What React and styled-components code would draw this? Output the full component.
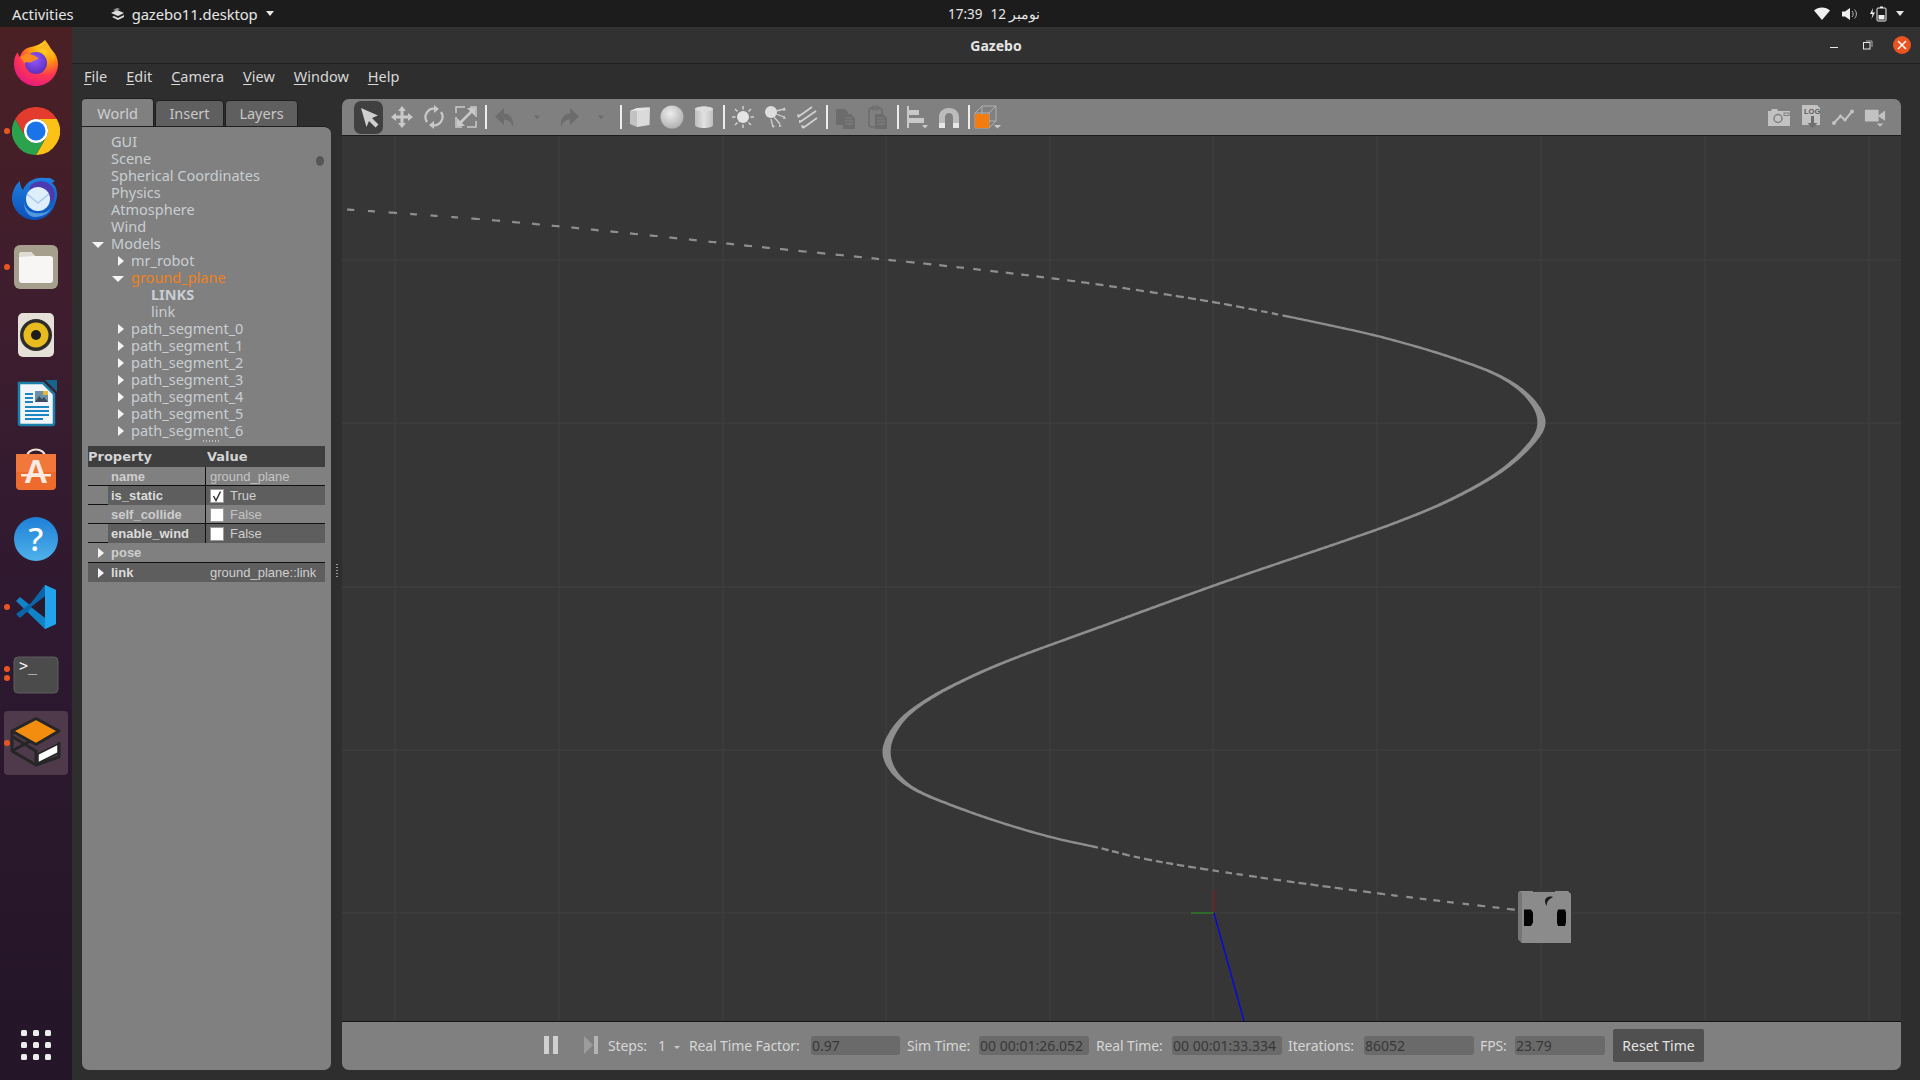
import React from 'react';
import styled, { createGlobalStyle } from 'styled-components';

const UI = '"Noto Sans", "Open Sans", sans-serif';
const ARIAL = '"Liberation Sans", Arial, sans-serif';

const Global = createGlobalStyle`
  html, body { margin: 0; padding: 0; height: 100%; background: #2e2e2e; overflow: hidden; }
  #root { width: 1920px; height: 1080px; }
  * { box-sizing: border-box; }
`;

const Screen = styled.div`
  width: 1920px; height: 1080px; display: flex; flex-direction: column;
  font-family: ${UI}; color: #ddd; overflow: hidden;
`;
const TopBar = styled.div`
  height: 27px; background: #1c1c1c; display: grid; grid-template-columns: 948px auto 1fr;
  align-items: center; font-size: 14.8px; color: #e6e6e6; flex: none;
`;
const TopLeft = styled.div`display: flex; align-items: center; padding-left: 12px;`;
const AppName = styled.span`display: flex; align-items: center; margin-left: 36px; gap: 6px; letter-spacing: -0.1px;`;
const Clock = styled.div`font-size: 13.5px; display: flex; gap: 8px; direction: ltr;`;
const TopRight = styled.div`display: flex; justify-content: flex-end; align-items: center; gap: 12px; padding-right: 16px;`;
const Caret = styled.i`
  width: 0; height: 0; border-left: 4.5px solid transparent; border-right: 4.5px solid transparent;
  border-top: 5px solid #e6e6e6; display: inline-block; margin-left: ${p => p.$ml ?? 2}px;
`;
const Body = styled.div`flex: 1; display: flex; min-height: 0;`;
const Dock = styled.div`
  width: 72px; flex: none; display: flex; flex-direction: column; padding-top: 2px; padding-bottom: 17px;
  background: linear-gradient(180deg, #4a2024 0%, #3d1d2e 28%, #2e1930 55%, #241528 100%);
`;
const Slot = styled.div`
  height: 68px; display: flex; align-items: center; justify-content: center; position: relative; flex: none;
`;
const Active = styled.div`
  width: 64px; height: 64px; border-radius: 4px; background: #4f3a4c; display: flex; align-items: center; justify-content: center;
`;
const Dot = styled.i`
  position: absolute; left: 4px; top: ${p => p.$top}px; width: 6px; height: 6px; border-radius: 50%; background: #e95420;
`;
const GridSlot = styled.div`
  margin-top: auto; height: 36px; display: grid; grid-template-columns: repeat(3, 6px); grid-auto-rows: 6px; gap: 6px;
  justify-content: center; align-content: center;
`;
const GridDot = styled.i`background: #ececec; border-radius: 1.5px;`;

const Win = styled.div`flex: 1; display: flex; flex-direction: column; background: #2e2e2e; min-width: 0;`;
const TitleBar = styled.div`
  height: 37px; flex: none; display: grid; grid-template-columns: 1fr auto 1fr; align-items: center;
  background: #313131; border-bottom: 1px solid #1f1f1f;
`;
const Title = styled.div`font-weight: 700; font-size: 14px; color: #e4e4e4;`;
const Controls = styled.div`display: flex; justify-content: flex-end; align-items: center; gap: 24px; padding-right: 9px;`;
const CloseBtn = styled.div`
  width: 18px; height: 18px; border-radius: 50%; background: #e95420; display: flex; align-items: center; justify-content: center;
  margin-left: -4px;
`;
const MenuBar = styled.div`
  height: 34px; flex: none; display: flex; align-items: center; padding: 0 0 11px 12px; gap: 19px; font-size: 14.5px; color: #d8d8d8;
`;
const MenuItem = styled.span`u { text-underline-offset: 2px; text-decoration-thickness: 1px; }`;
const Content = styled.div`flex: 1; display: flex; padding: 0 19px 10px 10px; min-height: 0;`;
const LeftCol = styled.div`width: 249px; flex: none; display: flex; flex-direction: column;`;
const Tabs = styled.div`height: 29px; display: flex; align-items: flex-end; flex: none; gap: 1px; padding-left: 0;`;
const Tab = styled.div`
  width: ${p => p.$w}px; height: ${p => (p.$active ? 29 : 27)}px; border-radius: 4px 4px 0 0;
  display: flex; align-items: center; justify-content: center; font-size: 14.5px; padding-bottom: ${p => (p.$active ? 0 : 2)}px;
  background: ${p => (p.$active ? '#808080' : '#5f5f5f')}; color: ${p => (p.$active ? '#cfcfcf' : '#c8c8c8')};
  border: 1px solid #1e1e1e; border-bottom: ${p => (p.$active ? 'none' : '1px solid #1e1e1e')};
  border-left: ${p => (p.$active ? 'none' : '1px solid #1e1e1e')};
`;
const Panel = styled.div`
  flex: 1; background: #808080; border-radius: 0 7px 7px 7px; display: flex; flex-direction: column; min-height: 0;
  border-top: 1px solid #1e1e1e; margin-top: -1px; position: relative;
`;
const Tree = styled.div`height: 316px; overflow: hidden; padding-top: 6px; flex: none; position: relative;`;
const TreeRow = styled.div`
  height: 17px; display: flex; align-items: center; font-size: 14.5px; line-height: 17px; white-space: nowrap;
  padding-left: ${p => p.$x}px; position: relative; color: ${p => (p.$orange ? '#f0801a' : '#c9ced2')};
  font-weight: ${p => (p.$bold ? 700 : 400)};
`;
const ArrowRight = styled.i`
  position: absolute; left: ${p => p.$x}px; top: 50%; margin-top: -5px; width: 0; height: 0;
  border-top: 5px solid transparent; border-bottom: 5px solid transparent; border-left: 6px solid #f4f4f4;
`;
const ArrowDown = styled.i`
  position: absolute; left: ${p => p.$x}px; top: 50%; margin-top: -2px; width: 0; height: 0;
  border-left: 6px solid transparent; border-right: 6px solid transparent; border-top: 6px solid #f4f4f4;
`;
const ScrollBlob = styled.i`position: absolute; right: 7px; top: 29px; width: 8px; height: 10px; border-radius: 50%; background: #565656;`;
const Dots = styled.div`
  position: absolute; left: 121px; top: 313px; width: 16px; height: 2px;
  background: repeating-linear-gradient(90deg, #c0c0c0 0 1px, transparent 1px 3px);
`;
const Table = styled.div`margin: 3px 6px 0; width: 237px; font-family: ${ARIAL}; flex: none;`;
const THead = styled.div`
  height: 21px; background: #3e3e3e; display: grid; grid-template-columns: 119px 1fr; align-items: center;
  font-family: "DejaVu Sans", ${ARIAL}; font-weight: 700; font-size: 13px; color: #d4d4d4;
`;
const PropRow = styled.div`
  display: grid; grid-template-columns: 118px 1fr; border-bottom: 1px solid #111; font-size: 13px; line-height: 18px;
  background: ${p => (p.$full ? '#5e5e5e' : 'transparent')};
  height: ${p => p.$h || 19}px;
`;
const PropName = styled.div`
  font-weight: 700; color: ${p => (p.$dark ? '#dcdcdc' : '#cdcdcd')}; padding-left: ${p => p.$pad || 0}px; margin-left: ${p => p.$m || 0}px;
  background: ${p => (p.$dark ? '#5e5e5e' : 'transparent')}; position: relative; border-right: ${p => (p.$line ? '1px solid #111' : 'none')};
  display: flex; align-items: center; padding-top: 1px;
`;
const PropVal = styled.div`
  color: ${p => (p.$dark ? '#cfcfcf' : '#c4c4c4')}; background: ${p => (p.$dark ? '#5e5e5e' : 'transparent')}; padding-left: 4px;
  display: flex; align-items: center; gap: 6px; white-space: nowrap; padding-top: 1px;
`;
const Check = styled.span`
  width: 14px; height: 14px; background: #fff; border: 1px solid #9a9a9a; display: inline-flex; align-items: center; justify-content: center;
`;
const Split = styled.div`width: 11px; flex: none; display: flex; align-items: center; justify-content: center;`;
const Grip = styled.div`
  width: 2px; height: 14px; margin-top: -27px;
  background: repeating-linear-gradient(180deg, #9a9a9a 0 1px, transparent 1px 3px);
`;
const RightCol = styled.div`flex: 1; display: flex; flex-direction: column; min-width: 0; position: relative;`;
const Toolbar = styled.div`
  height: 37px; flex: none; background: #808080; border-radius: 7px 7px 0 0; border-bottom: 1px solid #1c1c1c;
  display: flex; align-items: center; padding: 0 10px 0 12px; margin-top: 1px; position: relative;
`;
const ToolBtn = styled.div`
  width: ${p => p.$w || 32}px; height: 33px; flex: none; display: flex; align-items: center; justify-content: center;
  border-radius: 7px; background: ${p => (p.$on ? '#404040' : 'transparent')}; margin-right: ${p => p.$mr || 0}px;
`;
const Sep = styled.i`width: 2px; height: 24px; background: #ededed; flex: none; margin: 0 2px 0 3px;`;
const Spacer = styled.div`flex: 1;`;
const Viewport = styled.div`flex: 1; background: #363636; position: relative; min-height: 0; border-bottom: 1px solid #141414;`;
const Scene = styled.svg`position: absolute; inset: 0; width: 100%; height: 100%; display: block;`;
const Status = styled.div`
  height: 48px; flex: none; background: #808080; border-radius: 0 0 7px 7px; display: flex; align-items: center;
  padding: 0 0 2px 202px; font-size: 14px; color: #d6d6d6;
`;
const Label = styled.span`
  width: ${p => p.$w}px; margin-left: ${p => p.$ml || 0}px; flex: none; white-space: nowrap; letter-spacing: -0.12px;
`;
const Field = styled.div`
  width: ${p => p.$w}px; height: 19px; margin-left: ${p => p.$ml || 7}px; flex: none; background: #6a6a6a; border-radius: 3px;
  color: #383838; font-size: 14px; line-height: 19px; padding-left: ${p => p.$pl ?? 1}px; white-space: nowrap;
`;
const ResetBtn = styled.div`
  width: 91px; height: 33px; margin-left: 8px; background: #505050; border-radius: 2px; flex: none;
  display: flex; align-items: center; justify-content: center; color: #e4e4e4; font-size: 14px;
`;
const StepDrop = styled.i`
  width: 0; height: 0; border-left: 3px solid transparent; border-right: 3px solid transparent; border-top: 3px solid #c8c8c8;
  margin-left: 8px; margin-top: 4px; flex: none;
`;

/* ---------- curve ---------- */
const CTRL = [
  [347,209.500],[490,220],[626,233],[760,247],[899,261],[1000,272],[1102,285],[1224,304],[1347,329],[1400,342],[1450,357],[1500,376],[1530,398],[1543,423],
  [1530,445],[1500,472],[1450,500],[1400,521],[1347,540],[1224,582],[1100,627],[1010,660],[960,682],[927,700],[903,718],[890,737],[885,752],
  [892,770],[910,787],[943,802],[993,820],[1050,837],[1100,848],[1150,860],[1250,876],[1383,894],[1517,910],
];
function buildCurve() {
  let dense = [];
  for (let i = 0; i < CTRL.length - 1; i++) {
    const p0 = CTRL[Math.max(i - 1, 0)], p1 = CTRL[i], p2 = CTRL[i + 1], p3 = CTRL[Math.min(i + 2, CTRL.length - 1)];
    const n = Math.ceil(Math.hypot(p2[0] - p1[0], p2[1] - p1[1]) / 2);
    for (let k = 0; k < n; k++) {
      const t = k / n, t2 = t * t, t3 = t2 * t;
      dense.push([0, 1].map(a => 0.5 * (2 * p1[a] + (p2[a] - p0[a]) * t + (2 * p0[a] - 5 * p1[a] + 4 * p2[a] - p3[a]) * t2 + (3 * p1[a] - p0[a] - 3 * p2[a] + p3[a]) * t3)));
    }
  }
  dense.push(CTRL[CTRL.length - 1]);
  for (let pass = 0; pass < 2; pass++) {
    dense = dense.map((p, i) => {
      const r = Math.min(5, i, dense.length - 1 - i);
      let x = 0, y = 0;
      for (let j = -r; j <= r; j++) { x += dense[i + j][0]; y += dense[i + j][1]; }
      return [x / (2 * r + 1), y / (2 * r + 1)];
    });
  }
  let tipIdx = 0;
  dense.forEach((p, i) => { if (p[1] > 600 && (dense[tipIdx][1] <= 600 || p[0] < dense[tipIdx][0])) tipIdx = i; });
  const ribbon = pts => {
    if (pts.length < 2) return '';
    const A = [], B = [];
    pts.forEach((p, i) => {
      const a = pts[Math.max(i - 1, 0)], b = pts[Math.min(i + 1, pts.length - 1)];
      const dx = b[0] - a[0], dy = b[1] - a[1], len = Math.hypot(dx, dy) || 1;
      const w = 2.2 + 6 * Math.pow(Math.abs(dy) / len, 2.5);
      const nx = -dy / len, ny = dx / len;
      A.push(`${(p[0] + nx * w / 2).toFixed(1)} ${(p[1] + ny * w / 2).toFixed(1)}`);
      B.unshift(`${(p[0] - nx * w / 2).toFixed(1)} ${(p[1] - ny * w / 2).toFixed(1)}`);
    });
    return `M${A.join('L')}L${B.join('L')}Z`;
  };
  let d = '', run = [], s = 0, next = 0;
  const dash = 8.5;
  dense.forEach((p, i) => {
    if (i > 0) s += Math.hypot(p[0] - dense[i - 1][0], p[1] - dense[i - 1][1]);
    const top = i < tipIdx && p[1] < 423 && p[0] < 1300;
    const bottom = i > tipIdx && p[0] > 1090;
    if (top || bottom) {
      const pitch = top ? (p[0] < 900 ? 20 - (p[0] - 352) / 548 * 3.6 : 16.4 - (p[0] - 900) / 400 * 6.4) : 9.5 + (p[0] - 1090) / 427 * 5;
      if (s >= next) next = s + pitch;
      const phase = pitch - (next - s);
      if (phase <= dash) run.push(p);
      else if (run.length) { d += ribbon(run); run = []; }
    } else {
      next = s;
      run.push(p);
    }
  });
  if (run.length) d += ribbon(run);
  return d;
}
const CURVE = buildCurve();
const VX = [395, 559, 723, 886, 1050, 1213, 1377, 1541, 1705, 1869];
const HY = [260, 423, 587, 750, 913];

function SceneArt() {
  return (
    <Scene viewBox="342 136 1559 885" preserveAspectRatio="none">
      {VX.map(x => <line key={x} x1={x} x2={x} y1="136" y2="1021" stroke="#404040" strokeWidth="1" />)}
      {HY.map(y => <line key={y} x1="342" x2="1901" y1={y} y2={y} stroke="#404040" strokeWidth="1" />)}
      <path d={CURVE} fill="#8e8e8e" />
      <line x1="1214" y1="913" x2="1214" y2="890" stroke="#6a2424" strokeWidth="2" />
      <line x1="1191" y1="913" x2="1214" y2="913" stroke="#2f6a2a" strokeWidth="2" />
      <line x1="1214" y1="913" x2="1244" y2="1021" stroke="#0a0ad8" strokeWidth="1.5" />
      <path d="M1520 891H1568L1571 894V943H1522L1518 939V893Z" fill="#8b8b8b" />
      <path d="M1518 893L1520 891L1522 894V943L1518 939Z" fill="#767676" />
      <rect x="1533" y="890.5" width="22" height="1.5" fill="#3a3a3a" />
      <path d="M1524 909.5h7l2 3v10l-2 3.5h-7Z" fill="#050505" />
      <path d="M1558 909.5h7l1 3v10l-1 3.5h-7l-1-3v-10Z" fill="#050505" />
      <path d="M1553 897c-4-1.500-8 1-8 4 0 2 1 4 2 5-.3-3 0-6 6-9Z" fill="#1a1a1a" />
    </Scene>
  );
}

/* ---------- icons ---------- */
const G = ({ children, size = 24, vb = '0 0 24 24' }) => <svg width={size} height={size} viewBox={vb}>{children}</svg>;
const L = '#c9c9c9';
const D = '#6c6c6c';
const ic = {
  select: <G><path d="M4 3L21 10.500L15 13L21.500 19.500L18.500 22.500L12 16L9.500 22Z" fill="#cfcfcf" /></G>,
  move: <G><path d="M12 1l4 5h-2.500v4.500H18V8l5 4-5 4v-2.500h-4.500V18H16l-4 5-4-5h2.500v-4.500H6V16l-5-4 5-4v2.500h4.500V6H8Z" fill={L} /></G>,
  rotate: <G><g fill="none" stroke={L} strokeWidth="2.2"><path d="M5 17A8.500 8.500 0 0 1 13.500 3.800" /><path d="M19 7A8.500 8.500 0 0 1 10.500 20.200" /></g><path d="M12 0l5 4-5 4Z M12 16v8l-5-4Z" fill={L} /></G>,
  scale: <G><path d="M2 8V2h9M22 16v6h-9M2 12v10h6M22 12V2h-6" fill="none" stroke={L} strokeWidth="1.500" /><path d="M6 18L18 6" stroke={L} strokeWidth="2.500" /><path d="M13 3h8v8ZM3 13v8h8Z" fill={L} /></G>,
  undo: <G><path d="M11 3L2 11.500L11 20V14.500C15 14.500 18 17 20 21.500C21 14 17 8.500 11 8.500Z" fill={D} /></G>,
  redo: <G><path d="M13 3L22 11.500L13 20V14.500C9 14.500 6 17 4 21.500C3 14 7 8.500 13 8.500Z" fill={D} /></G>,
  dd: <G><path d="M9 10.500h6l-3 4Z" fill={D} /></G>,
  box: <G><path d="M2 6L9 3V22L2 19Z" fill="#c2c2c2" /><path d="M9 3L22 2.500L21.500 20L9 22Z" fill="#dadada" /><path d="M2 6L9 3L22 2.500L16 5.500Z" fill="#e6e6e6" /></G>,
  sphere: <G><defs><radialGradient id="sph" cx="42%" cy="35%" r="70%"><stop offset="0" stopColor="#eeeeee" /><stop offset="1" stopColor="#adadad" /></radialGradient></defs><ellipse cx="12" cy="12" rx="11.500" ry="11.500" fill="url(#sph)" /></G>,
  cyl: <G><defs><linearGradient id="cyl"><stop offset="0" stopColor="#bdbdbd" /><stop offset=".5" stopColor="#e2e2e2" /><stop offset="1" stopColor="#bfbfbf" /></linearGradient></defs><path d="M3 4.500C3 .5 21 .5 21 4.500V20C21 24 3 24 3 20Z" fill="url(#cyl)" /><ellipse cx="12" cy="4" rx="9" ry="2.500" fill="#dcdcdc" /></G>,
  sun: <G><circle cx="12" cy="12" r="6" fill="#e4e4e4" /><g stroke="#d0d0d0" strokeWidth="1.500"><path d="M12 1v3.500M12 19.500V23M1 12h3.500M19.500 12H23M4 4l2.500 2.500M17.500 17.500L20 20M20 4l-2.500 2.500M4 20l2.500-2.500" /></g></G>,
  spot: <G><circle cx="8" cy="7" r="6" fill="#dedede" /><g stroke="#d0d0d0" strokeWidth="1.300"><path d="M13 6l8-2M13 9l8 3M11 12l6 7M8 14l2 8" /></g><path d="M21 2l2 3-3 1ZM21 10.500l2 3-3 .5ZM16 19l3 2-3 1ZM9 20l3 1-2 2Z" fill="#d0d0d0" /></G>,
  dir: <G><g stroke="#d0d0d0" strokeWidth="1.800"><path d="M3 12L17 2M5 17L21 6M8 23L22 13" /></g><path d="M2 9l4 1-3 3ZM4 15l3 1-3 2.500ZM6 20l4 1-3 2.500Z" fill="#d0d0d0" /></G>,
  copy: <G><path d="M2 4h9l3 3v3h-4v10H2Z" fill={D} /><path d="M9 9h8l4 4v11H9Z" fill="#6c6c6c" /><path d="M11 13h7M11 16h8M11 19h8" stroke="#808080" /></G>,
  paste: <G><rect x="3" y="3" width="13" height="19" rx="3" fill="none" stroke={D} strokeWidth="1.500" /><rect x="6" y="1" width="7" height="4" rx="1.500" fill="none" stroke={D} /><path d="M9 9h8l4 4v11H9Z" fill={D} /><path d="M11 13h7M11 16h8M11 19h8" stroke="#808080" /></G>,
  align: <G><path d="M3 1v22" stroke={L} strokeWidth="2" /><path d="M4 5h10v5H4ZM4 13h15v5H4Z" fill={L} /><path d="M17 20h6l-3 3.500Z" fill={L} /></G>,
  magnet: <G><path d="M2 23V12C2 0 22 0 22 12V23H16V12C16 6.500 8 6.500 8 12V23Z" fill="#bcbcbc" /><path d="M2 18h6v5H2ZM16 18h6v5h-6Z" fill="#e6e6e6" /></G>,
  view: <G size={28} vb="0 0 28 24"><path d="M1 8L8 1H22V16L15 23H1Z M1 8H15V23 M15 8L22 1 M1 23L8 16H22 M8 1V16" fill="none" stroke="#b0b0b0" strokeWidth="1" /><rect x="1" y="9" width="14" height="14" fill="#f47c0f" /><path d="M20 20h7l-3.500 3.500Z" fill={L} /></G>,
  camera: <G size={24} vb="0 0 24 24"><path d="M1 6h3l1-2h5l1 2h12v15H1Z" fill="#c2c2c2" /><circle cx="11" cy="13.500" r="4" fill="none" stroke="#808080" strokeWidth="1.500" /><rect x="17" y="8" width="5" height="2.500" fill="none" stroke="#808080" /></G>,
  log: <G size={26} vb="0 0 24 26"><path d="M3 1H18L21 4V21H3Z" fill="#c2c2c2" /><text x="5" y="10" fontSize="7.500" fontWeight="700" fontFamily={ARIAL} fill="#5c5c5c">LOG</text><path d="M12 12h3v7h3.500L13.500 24L8.500 19H12Z" fill="#6e6e6e" /></G>,
  plot: <G size={24} vb="0 0 24 24"><path d="M3 18L9.500 11L14 15L21 6.500" fill="none" stroke="#c2c2c2" strokeWidth="2" /><circle cx="3" cy="18" r="2" fill="#c2c2c2" /><circle cx="21" cy="6.500" r="2" fill="#c2c2c2" /><circle cx="9.500" cy="11" r="1.500" fill="#c2c2c2" /><circle cx="14" cy="15" r="1.500" fill="#c2c2c2" /></G>,
  video: <G size={22} vb="0 0 24 24"><rect x="1" y="4" width="15" height="13" rx="1" fill="#c2c2c2" /><path d="M16 10L23 5V16L16 11.500Z" fill="#c2c2c2" /><path d="M14 19h7l-3.500 3.500Z" fill="#c2c2c2" /></G>,
};

const Firefox = () => (
  <svg width="48" height="48" viewBox="0 0 48 48">
    <defs>
      <radialGradient id="ff1" cx="70%" cy="15%" r="95%"><stop offset="0" stopColor="#ffe226" /><stop offset=".35" stopColor="#ff980e" /><stop offset=".65" stopColor="#ff3750" /><stop offset="1" stopColor="#e31587" /></radialGradient>
      <radialGradient id="ff2" cx="45%" cy="35%" r="70%"><stop offset="0" stopColor="#9059ff" /><stop offset="1" stopColor="#5b2bb5" /></radialGradient>
    </defs>
    <path d="M33 1c1 5 4 7 7 10 4 4 6 9 6 14 0 12-10 22-22 22S2 37 2 25c0-5 1-9 4-12 0 3 1 4 2 5 1-5 5-9 11-10 5-1 10-3 14-7Z" fill="url(#ff1)" />
    <circle cx="24" cy="24" r="11" fill="url(#ff2)" />
    <path d="M8 18c4-3 9-4 13-2 3 1 4 3 6 3-2 2-5 2-6 3-2 3-7 0-9 2-1-3-3-4-4-6Z" fill="#ff8a1f" />
    <path d="M33 1c4 5 9 12 9 20-2-5-5-8-9-10-3-1-7-1-9-1 3-2 8-4 9-9Z" fill="#ffb81f" />
  </svg>
);
const ChromeSector = ({ fill, rot }) => <path d="M3.200 12A24 24 0 0 1 44.800 12H24A12 12 0 0 0 13.600 30Z" fill={fill} transform={`rotate(${rot} 24 24)`} />;
const Chrome = () => (
  <svg width="48" height="48" viewBox="0 0 48 48">
    <ChromeSector fill="#e33b2e" rot={0} />
    <ChromeSector fill="#fbc116" rot={120} />
    <ChromeSector fill="#2ba24c" rot={240} />
    <circle cx="24" cy="24" r="12" fill="#fff" />
    <circle cx="24" cy="24" r="9.500" fill="#1a73e8" />
  </svg>
);
const Thunderbird = () => (
  <svg width="48" height="48" viewBox="0 0 48 48">
    <defs><linearGradient id="tb" x1="0" y1="0" x2="0" y2="1"><stop offset="0" stopColor="#1f80e0" /><stop offset="1" stopColor="#0b50b8" /></linearGradient></defs>
    <path d="M8 6c0 4 1 7 3 9 3-8 12-13 21-12l6 0 5 3-3 2 3 3c2 5 3 9 1 15-2 10-11 19-21 19C11 45 1 36 0 24c0-6 2-13 8-18Z" fill="url(#tb)" />
    <path d="M20 9c7-5 17-3 21 4 3 5 2 11-1 15-3-8-9-11-16-11-6 0-9-4-4-8Z" fill="#4a3bb0" />
    <path d="M12 28c2 8 8 11 17 10 4 0 8-2 11-6-4 8-11 10-18 10-6-1-10-7-10-14Z" fill="#7fc4f5" opacity=".6" />
    <circle cx="26" cy="24" r="12" fill="#dfeefb" />
    <path d="M15 19l11 9 11-9" fill="none" stroke="#a9c9e8" strokeWidth="1.500" />
  </svg>
);
const Files = () => (
  <svg width="48" height="48" viewBox="0 0 48 48">
    <rect x="2" y="2" width="44" height="44" rx="6" fill="#a79f8d" />
    <path d="M7 12a3 3 0 0 1 3-3h9l4 4h15a3 3 0 0 1 3 3v21a3 3 0 0 1-3 3H10a3 3 0 0 1-3-3Z" fill="#f7f6f4" />
    <path d="M7 12a3 3 0 0 1 3-3h9l4 4-16 1Z" fill="#dfdcd5" />
  </svg>
);
const Rhythm = () => (
  <svg width="48" height="48" viewBox="0 0 48 48">
    <rect x="6" y="2" width="36" height="44" rx="5" fill="#e5e1d8" />
    <circle cx="24" cy="24" r="16" fill="#2f2d2a" />
    <circle cx="24" cy="24" r="12.500" fill="#e8bc1f" />
    <circle cx="24" cy="24" r="5" fill="#1e1c1a" />
  </svg>
);
const Writer = () => (
  <svg width="48" height="48" viewBox="0 0 48 48">
    <path d="M7 4H31L42 15V44a2 2 0 0 1-2 2H9a2 2 0 0 1-2-2Z" fill="#f2f5f7" stroke="#1b7ea8" strokeWidth="2.500" />
    <path d="M33 1L45 1V13Z" fill="#13658c" />
    <path d="M13 14h8v2h-8ZM13 18h8v2h-8ZM13 22h8v2h-8ZM13 27h24v2H13ZM13 31h24v2H13ZM13 35h24v2H13ZM13 39h18v2H13Z" fill="#1a85c0" />
    <rect x="23" y="12" width="13" height="11" fill="#6c8fa8" />
    <path d="M23 23l4-6 3 3 2-2 4 5Z" fill="#3c4c5c" /><rect x="31" y="12" width="5" height="4" fill="#e9b53a" />
  </svg>
);
const Software = () => (
  <svg width="48" height="48" viewBox="0 0 48 48">
    <path d="M15 10C15 0 33 0 33 10" fill="none" stroke="#efe1d4" strokeWidth="2" />
    <path d="M4 9a2 2 0 0 1 2-2h36a2 2 0 0 1 2 2v30a4 4 0 0 1-4 4H8a4 4 0 0 1-4-4Z" fill="#ee6b2e" />
    <path d="M4 7h40v18H4Z" fill="#f1773a" />
    <text x="24" y="36" textAnchor="middle" fontSize="33" fontWeight="700" fontFamily={ARIAL} fill="#f8ece2">A</text>
    <rect x="9" y="27" width="30" height="2.500" fill="#f8ece2" />
  </svg>
);
const Help = () => (
  <svg width="48" height="48" viewBox="0 0 48 48">
    <defs><linearGradient id="hp" x1="0" y1="0" x2="0" y2="1"><stop offset="0" stopColor="#1f7fd8" /><stop offset="1" stopColor="#4fb2ea" /></linearGradient></defs>
    <circle cx="24" cy="24" r="22" fill="url(#hp)" />
    <text x="24" y="36" textAnchor="middle" fontSize="33" fontFamily={UI} fontWeight="500" fill="#fff">?</text>
  </svg>
);
const VSCode = () => (
  <svg width="48" height="48" viewBox="0 0 48 48">
    <path d="M33 2L44 7V41L33 46L4 18L8 14L19 23Z" fill="#1383c9" />
    <path d="M33 2V46L44 41V7Z" fill="#21a4ec" />
    <path d="M4 31L8 35L33 13V2L19 20Z" fill="#0a66a8" />
    <path d="M33 13L19 24L33 35Z" fill="#2a1a2e" />
  </svg>
);
const Terminal = () => (
  <svg width="48" height="48" viewBox="0 0 48 48">
    <rect x="2" y="6" width="44" height="36" rx="4" fill="#4b4b4b" />
    <rect x="2" y="6" width="44" height="36" rx="4" fill="none" stroke="#5e5e5e" />
    <text x="7" y="20" fontSize="15" fontFamily='"DejaVu Sans Mono", monospace' fill="#eee">{'>_'}</text>
  </svg>
);
const Gazebo = () => (
  <svg width="52" height="52" viewBox="-2 -1 52 52">
    <path d="M0 13V33L24 47L47 39V24" fill="none" stroke="#262626" strokeWidth="3" strokeLinejoin="round" />
    <path d="M1 19L24 33V47" fill="none" stroke="#262626" strokeWidth="3" />
    <path d="M0 33L20 22" fill="none" stroke="#262626" strokeWidth="3" />
    <path d="M24 0.500L47 13L24 26.500L0 13Z" fill="#f28d0f" stroke="#262626" strokeWidth="3" strokeLinejoin="round" />
    <path d="M26 36L46 26V35L26 45Z" fill="#fff" stroke="#262626" strokeWidth="1.500" />
  </svg>
);

const DOCK = [
  [<Firefox />, []], [<Chrome />, [31]], [<Thunderbird />, []], [<Files />, [31]], [<Rhythm />, []], [<Writer />, []],
  [<Software />, []], [<Help />, []], [<VSCode />, [31]], [<Terminal />, [25, 34]],
];
const MENUS = ['File', 'Edit', 'Camera', 'View', 'Window', 'Help'];
const SEGMENTS = [0, 1, 2, 3, 4, 5, 6];
const TOP = ['GUI', 'Scene', 'Spherical Coordinates', 'Physics', 'Atmosphere', 'Wind'];

const Sharp = () => <svg width="16" height="16" viewBox="0 0 16 16"><path d="M1 7l6-3 7 3-6 3ZM2 11l2-1 4 2 6-3v2l-6 3Z" fill="#ddd" /><path d="M3 4l4-2 3 1-4 2Z" fill="#999" /></svg>;

export default function App() {
  return (
    <Screen>
      <Global />
      <TopBar>
        <TopLeft>
          <span>Activities</span>
          <AppName><Sharp />gazebo11.desktop <Caret /></AppName>
        </TopLeft>
        <Clock><span>17:39</span><span>12 نومبر</span></Clock>
        <TopRight>
          <svg width="16" height="14" viewBox="0 0 16 14"><path d="M0 3.500C4-.5 12-.5 16 3.500L8 13Z" fill="#f0f0f0" /></svg>
          <svg width="16" height="14" viewBox="0 0 16 14"><path d="M0 4.500h3L8 1V13L3 9.500H0Z" fill="#f0f0f0" /><path d="M10 4c1.500 1.500 1.500 4.500 0 6M12.500 2.500c2.500 2.500 2.500 6.500 0 9" fill="none" stroke="#bbb" /></svg>
          <svg width="18" height="16" viewBox="0 0 18 16"><path d="M3 2L0 8h2.500L1.500 13 5 6.500H2.500Z" fill="#f0f0f0" /><rect x="7" y="2" width="9" height="13" rx="1" fill="none" stroke="#f0f0f0" /><rect x="10" y="0.500" width="3" height="1.500" fill="#f0f0f0" /><rect x="8.500" y="9" width="6" height="4.500" fill="#f0f0f0" /></svg>
          <Caret $ml={-3.5} />
        </TopRight>
      </TopBar>
      <Body>
        <Dock>
          {DOCK.map(([icon, dots], i) => (
            <Slot key={i}>{dots.map(t => <Dot key={t} $top={t} />)}{icon}</Slot>
          ))}
          <Slot><Dot $top={31} /><Active><Gazebo /></Active></Slot>
          <GridSlot>{[...Array(9)].map((_, i) => <GridDot key={i} />)}</GridSlot>
        </Dock>
        <Win>
          <TitleBar>
            <span />
            <Title>Gazebo</Title>
            <Controls>
              <svg width="10" height="10" viewBox="0 0 10 10"><path d="M1 7.500h8" stroke="#e8e8e8" strokeWidth="1" /></svg>
              <svg width="10" height="10" viewBox="0 0 10 10"><rect x="0.500" y="2.500" width="6.500" height="6.500" fill="none" stroke="#e8e8e8" /><path d="M3 1h6v6" fill="none" stroke="#aaa" /></svg>
              <CloseBtn><svg width="10" height="10" viewBox="0 0 10 10"><path d="M1 1l8 8M9 1l-8 8" stroke="#fff" strokeWidth="1.500" /></svg></CloseBtn>
            </Controls>
          </TitleBar>
          <MenuBar>
            {MENUS.map(m => <MenuItem key={m}><u>{m[0]}</u>{m.slice(1)}</MenuItem>)}
          </MenuBar>
          <Content>
            <LeftCol>
              <Tabs>
                <Tab $w={72} $active>World</Tab>
                <Tab $w={69}>Insert</Tab>
                <Tab $w={73}>Layers</Tab>
              </Tabs>
              <Panel>
                <Tree>
                  <ScrollBlob />
                  {TOP.map(t => <TreeRow key={t} $x={29}>{t}</TreeRow>)}
                  <TreeRow $x={29}><ArrowDown $x={10} />Models</TreeRow>
                  <TreeRow $x={49}><ArrowRight $x={36} />mr_robot</TreeRow>
                  <TreeRow $x={49} $orange><ArrowDown $x={30} />ground_plane</TreeRow>
                  <TreeRow $x={69} $bold>LINKS</TreeRow>
                  <TreeRow $x={69}>link</TreeRow>
                  {SEGMENTS.map(n => <TreeRow key={n} $x={49}><ArrowRight $x={36} />path_segment_{n}</TreeRow>)}
                  <TreeRow $x={49}><ArrowRight $x={36} /></TreeRow>
                  <Dots />
                </Tree>
                <Table>
                  <THead><span>Property</span><span>Value</span></THead>
                  <PropRow>
                    <PropName $pad={23} $line>name</PropName>
                    <PropVal>ground_plane</PropVal>
                  </PropRow>
                  <PropRow>
                    <PropName $dark $m={20} $pad={3} $line>is_static</PropName>
                    <PropVal $dark><Check><svg width="12" height="12" viewBox="0 0 12 12"><path d="M2.500 6l2.500 4.500L9.500 1.500" fill="none" stroke="#333" strokeWidth="1.500" /></svg></Check>True</PropVal>
                  </PropRow>
                  <PropRow>
                    <PropName $pad={23} $line>self_collide</PropName>
                    <PropVal><Check />False</PropVal>
                  </PropRow>
                  <PropRow>
                    <PropName $dark $m={20} $pad={3} $line>enable_wind</PropName>
                    <PropVal $dark><Check />False</PropVal>
                  </PropRow>
                  <PropRow $h={20}>
                    <PropName $pad={23}><ArrowRight $x={10} />pose</PropName>
                    <PropVal />
                  </PropRow>
                  <PropRow $full>
                    <PropName $dark $pad={23}><ArrowRight $x={10} />link</PropName>
                    <PropVal $dark>ground_plane::link</PropVal>
                  </PropRow>
                </Table>
              </Panel>
            </LeftCol>
            <Split><Grip /></Split>
            <RightCol>
              <Toolbar>
                <ToolBtn $on $w={29} $mr={3}>{ic.select}</ToolBtn>
                <ToolBtn>{ic.move}</ToolBtn>
                <ToolBtn>{ic.rotate}</ToolBtn>
                <ToolBtn>{ic.scale}</ToolBtn>
                <Sep />
                <ToolBtn>{ic.undo}</ToolBtn>
                <ToolBtn>{ic.dd}</ToolBtn>
                <ToolBtn>{ic.redo}</ToolBtn>
                <ToolBtn>{ic.dd}</ToolBtn>
                <Sep />
                <ToolBtn>{ic.box}</ToolBtn>
                <ToolBtn>{ic.sphere}</ToolBtn>
                <ToolBtn>{ic.cyl}</ToolBtn>
                <Sep />
                <ToolBtn>{ic.sun}</ToolBtn>
                <ToolBtn>{ic.spot}</ToolBtn>
                <ToolBtn>{ic.dir}</ToolBtn>
                <Sep />
                <ToolBtn>{ic.copy}</ToolBtn>
                <ToolBtn>{ic.paste}</ToolBtn>
                <Sep />
                <ToolBtn>{ic.align}</ToolBtn>
                <ToolBtn>{ic.magnet}</ToolBtn>
                <Sep />
                <ToolBtn>{ic.view}</ToolBtn>
                <Spacer />
                <ToolBtn>{ic.camera}</ToolBtn>
                <ToolBtn>{ic.log}</ToolBtn>
                <ToolBtn>{ic.plot}</ToolBtn>
                <ToolBtn>{ic.video}</ToolBtn>
              </Toolbar>
              <Viewport><SceneArt /></Viewport>
              <Status>
                <svg width="14" height="18" viewBox="0 0 14 18"><path d="M0 0h5v18H0ZM9 0h5v18H9Z" fill="#d0d0d0" /></svg>
                <svg width="14" height="18" viewBox="0 0 14 18" style={{ marginLeft: 26, marginRight: 10 }}><path d="M0 0l9 9-9 9Z" fill="#9c9c9c" /><path d="M10 0h4v18h-4Z" fill="#b4b4b4" /></svg>
                <Label $w={50}>Steps:</Label>
                <Label $w={8}>1</Label>
                <StepDrop />
                <Label $w={115} $ml={9}>Real Time Factor:</Label>
                <Field $w={89}>0.97</Field>
                <Label $w={65} $ml={7}>Sim Time:</Label>
                <Field $w={110}>00 00:01:26.052</Field>
                <Label $w={69} $ml={7}>Real Time:</Label>
                <Field $w={110}>00 00:01:33.334</Field>
                <Label $w={69} $ml={6}>Iterations:</Label>
                <Field $w={110}>86052</Field>
                <Label $w={29} $ml={6}>FPS:</Label>
                <Field $w={90} $ml={6}>23.79</Field>
                <ResetBtn>Reset Time</ResetBtn>
              </Status>
            </RightCol>
          </Content>
        </Win>
      </Body>
    </Screen>
  );
}
